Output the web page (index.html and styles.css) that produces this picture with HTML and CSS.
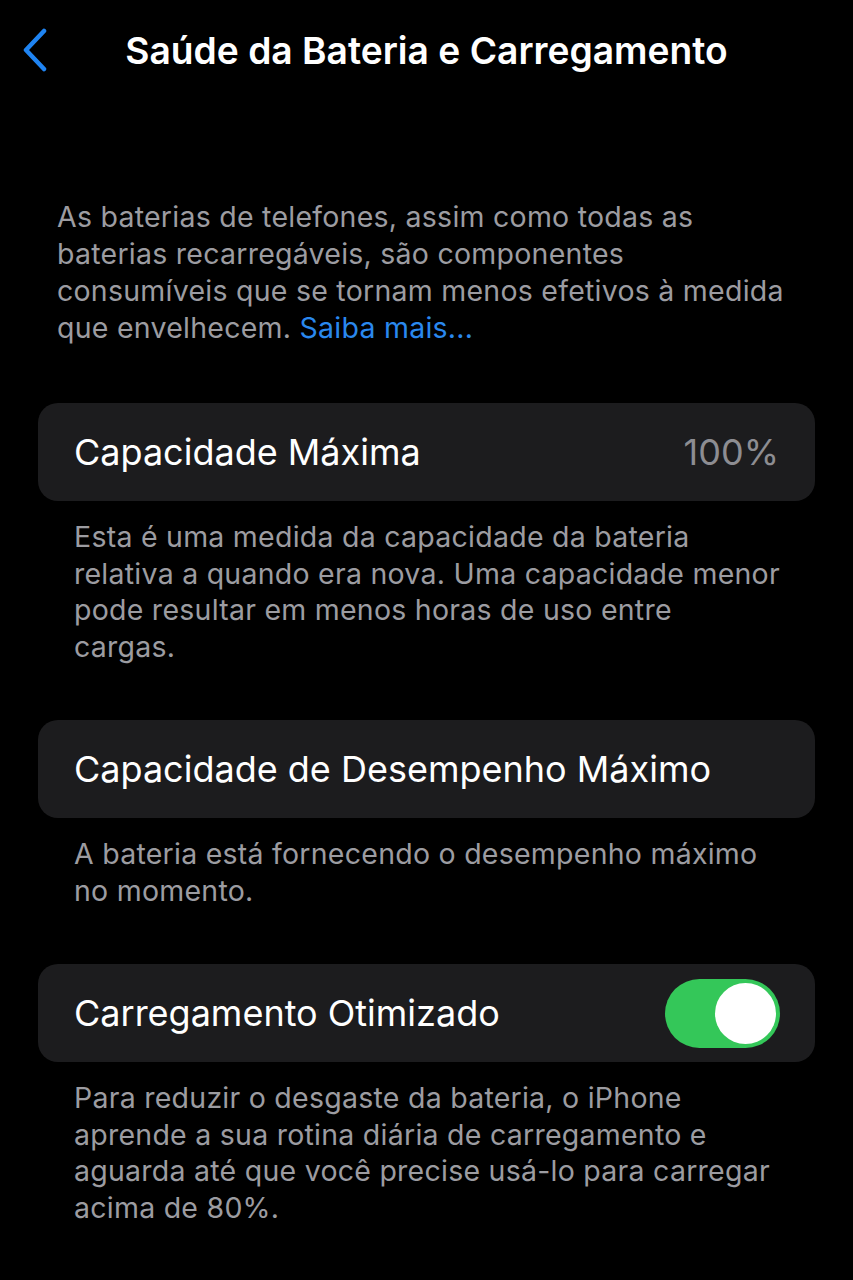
FILE: index.html
```html
<!DOCTYPE html>
<html lang="pt">
<head>
<meta charset="utf-8">
<title>Saúde da Bateria e Carregamento</title>
<link rel="stylesheet" href="styles.css">
</head>
<body>
<div class="screen">
  <header class="nav">
    <span class="back">
      <svg width="26" height="44" viewBox="0 0 26 44"><path d="M22 3 L4 22 L22 41" fill="none" stroke="#1f84f2" stroke-width="4.5" stroke-linecap="round" stroke-linejoin="round"/></svg>
    </span>
    <h1 class="title">Saúde da Bateria e Carregamento</h1>
  </header>
  <p class="intro">As baterias de telefones, assim como todas as baterias recarregáveis, são componentes consumíveis que se tornam menos efetivos à medida que envelhecem. <span class="link">Saiba mais...</span></p>

  <section class="group">
    <div class="card">
      <span class="label">Capacidade Máxima</span>
      <span class="value">100%</span>
    </div>
    <p class="footer">Esta é uma medida da capacidade da bateria relativa a quando era nova. Uma capacidade menor pode resultar em menos horas de uso entre<br>cargas.</p>
  </section>

  <section class="group">
    <div class="card">
      <span class="label">Capacidade de Desempenho Máximo</span>
    </div>
    <p class="footer">A bateria está fornecendo o desempenho máximo no momento.</p>
  </section>

  <section class="group">
    <div class="card">
      <span class="label">Carregamento Otimizado</span>
      <span class="toggle"><span class="knob"></span></span>
    </div>
    <p class="footer">Para reduzir o desgaste da bateria, o iPhone aprende a sua rotina diária de carregamento e aguarda até que você precise usá-lo para carregar acima de 80%.</p>
  </section>
</div>
</body>
</html>
```

FILE: styles.css
```css
html, body {
  margin: 0;
  padding: 0;
  background: #000;
}
body {
  font-family: Inter, "Noto Sans", "Liberation Sans", sans-serif;
  color: #fff;
}
.screen {
  width: 853px;
  min-height: 1280px;
  background: #000;
}
.nav {
  position: relative;
  height: 100px;
  display: flex;
  align-items: center;
  justify-content: center;
}
.back {
  position: absolute;
  left: 22px;
  top: 28px;
  display: flex;
}
.title {
  margin: 0;
  font-size: 37.2px;
  font-weight: 600;
  color: #fff;
}
.intro {
  margin: 98px 0 0 0;
  padding: 0 65px 0 57px;
  font-size: 28.5px;
  letter-spacing: 0.25px;
  line-height: 37px;
  color: #9c9ca1;
}
.link {
  color: #2a88ee;
}
.group {
  margin-top: 57px;
}
.group + .group {
  margin-top: 55px;
}
.card {
  margin: 0 38px;
  height: 98px;
  border-radius: 20px;
  background: #1c1c1e;
  display: flex;
  align-items: center;
  justify-content: space-between;
  padding: 0 36px;
  box-sizing: border-box;
}
.label {
  font-size: 36px;
  color: #fff;
}
.value {
  font-size: 36px;
  color: #8d8d92;
}
.footer {
  margin: 18px 0 0 0;
  padding: 0 68px 0 74px;
  font-size: 28.5px;
  letter-spacing: 0.25px;
  line-height: 36.5px;
  color: #9c9ca1;
}
.toggle {
  width: 115px;
  height: 69px;
  border-radius: 35px;
  background: #34c759;
  display: flex;
  align-items: center;
  justify-content: flex-end;
  padding: 0 4px;
  box-sizing: border-box;
  margin-right: -1px;
}
.knob {
  width: 61px;
  height: 61px;
  border-radius: 50%;
  background: #fff;
}
```
